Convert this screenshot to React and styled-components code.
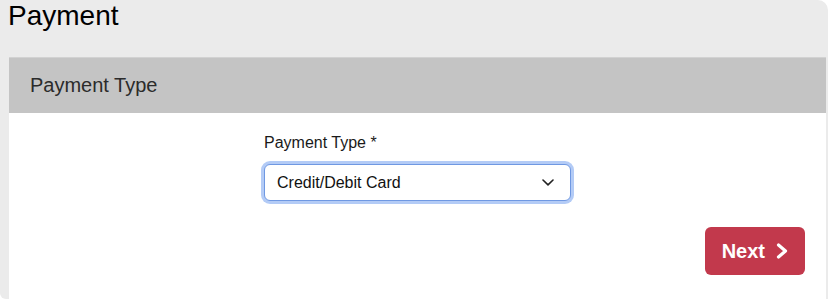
import styled, { createGlobalStyle } from 'styled-components';

const GlobalStyle = createGlobalStyle`
  html, body {
    margin: 0;
    padding: 0;
    background: #ffffff;
    font-family: 'Liberation Sans', Arial, Helvetica, sans-serif;
  }
`;

const App = () => {
  return (
    <>
      <GlobalStyle />
      <Page>
        <Title>Payment</Title>
        <Card>
          <CardHeader>Payment Type</CardHeader>
          <CardBody>
            <Field>
              <Label htmlFor="payment-type">Payment Type *</Label>
              <SelectBox>
                <span>Credit/Debit Card</span>
                <svg width="12" height="7" viewBox="0 0 12 7" aria-hidden="true">
                  <polyline points="1,1 6,5.8 11,1" fill="none" stroke="#222" strokeWidth="1.6" strokeLinecap="round" strokeLinejoin="round" />
                </svg>
              </SelectBox>
            </Field>
            <Actions>
              <NextButton type="button">
                Next
                <svg width="12" height="16" viewBox="0 0 12 16" aria-hidden="true">
                  <polyline points="2.5,2 9.5,8 2.5,14" fill="none" stroke="#fff" strokeWidth="3.2" strokeLinecap="round" strokeLinejoin="round" />
                </svg>
              </NextButton>
            </Actions>
          </CardBody>
        </Card>
      </Page>
    </>
  );
};

export default App;

const Page = styled.div`
  width: 828px;
  box-sizing: border-box;
  background: #ebebeb;
  padding: 0 2px 0 9px;
  border-top-right-radius: 10px;
  border-bottom-left-radius: 6px;
`;

const Title = styled.h1`
  margin: 0 0 0 -1px;
  padding: 0;
  height: 57px;
  font-size: 28px;
  line-height: 32px;
  font-weight: 400;
  color: #000;
`;

const Card = styled.div`
  background: #fff;
`;

const CardHeader = styled.div`
  display: flex;
  align-items: center;
  height: 56px;
  box-sizing: border-box;
  padding-left: 21px;
  background: #c4c4c4;
  border-top: 1px solid #d2d2d2;
  font-size: 20px;
  color: #2b2b2b;
`;

const CardBody = styled.div`
  display: flex;
  flex-direction: column;
  padding: 21px 21px 24px;
`;

const Field = styled.div`
  display: flex;
  flex-direction: column;
  align-self: center;
  width: 307px;
  gap: 12px;
`;

const Label = styled.label`
  font-size: 16px;
  color: #1a1a1a;
`;

const SelectBox = styled.div`
  display: flex;
  align-items: center;
  justify-content: space-between;
  height: 37px;
  box-sizing: border-box;
  padding: 0 16px 0 12px;
  border: 1px solid #6f98e2;
  border-radius: 6px;
  box-shadow: 0 0 0 3px #b3cbf6;
  background: #fff;
  font-size: 16px;
  color: #111;
`;

const Actions = styled.div`
  display: flex;
  justify-content: flex-end;
  margin-top: 26px;
`;

const NextButton = styled.button`
  display: flex;
  align-items: center;
  gap: 11px;
  height: 48px;
  padding: 0 17px;
  border: none;
  border-radius: 6px;
  background: #c2394c;
  color: #fff;
  font-family: 'Liberation Sans', Arial, sans-serif;
  font-size: 20px;
  font-weight: 700;
`;
